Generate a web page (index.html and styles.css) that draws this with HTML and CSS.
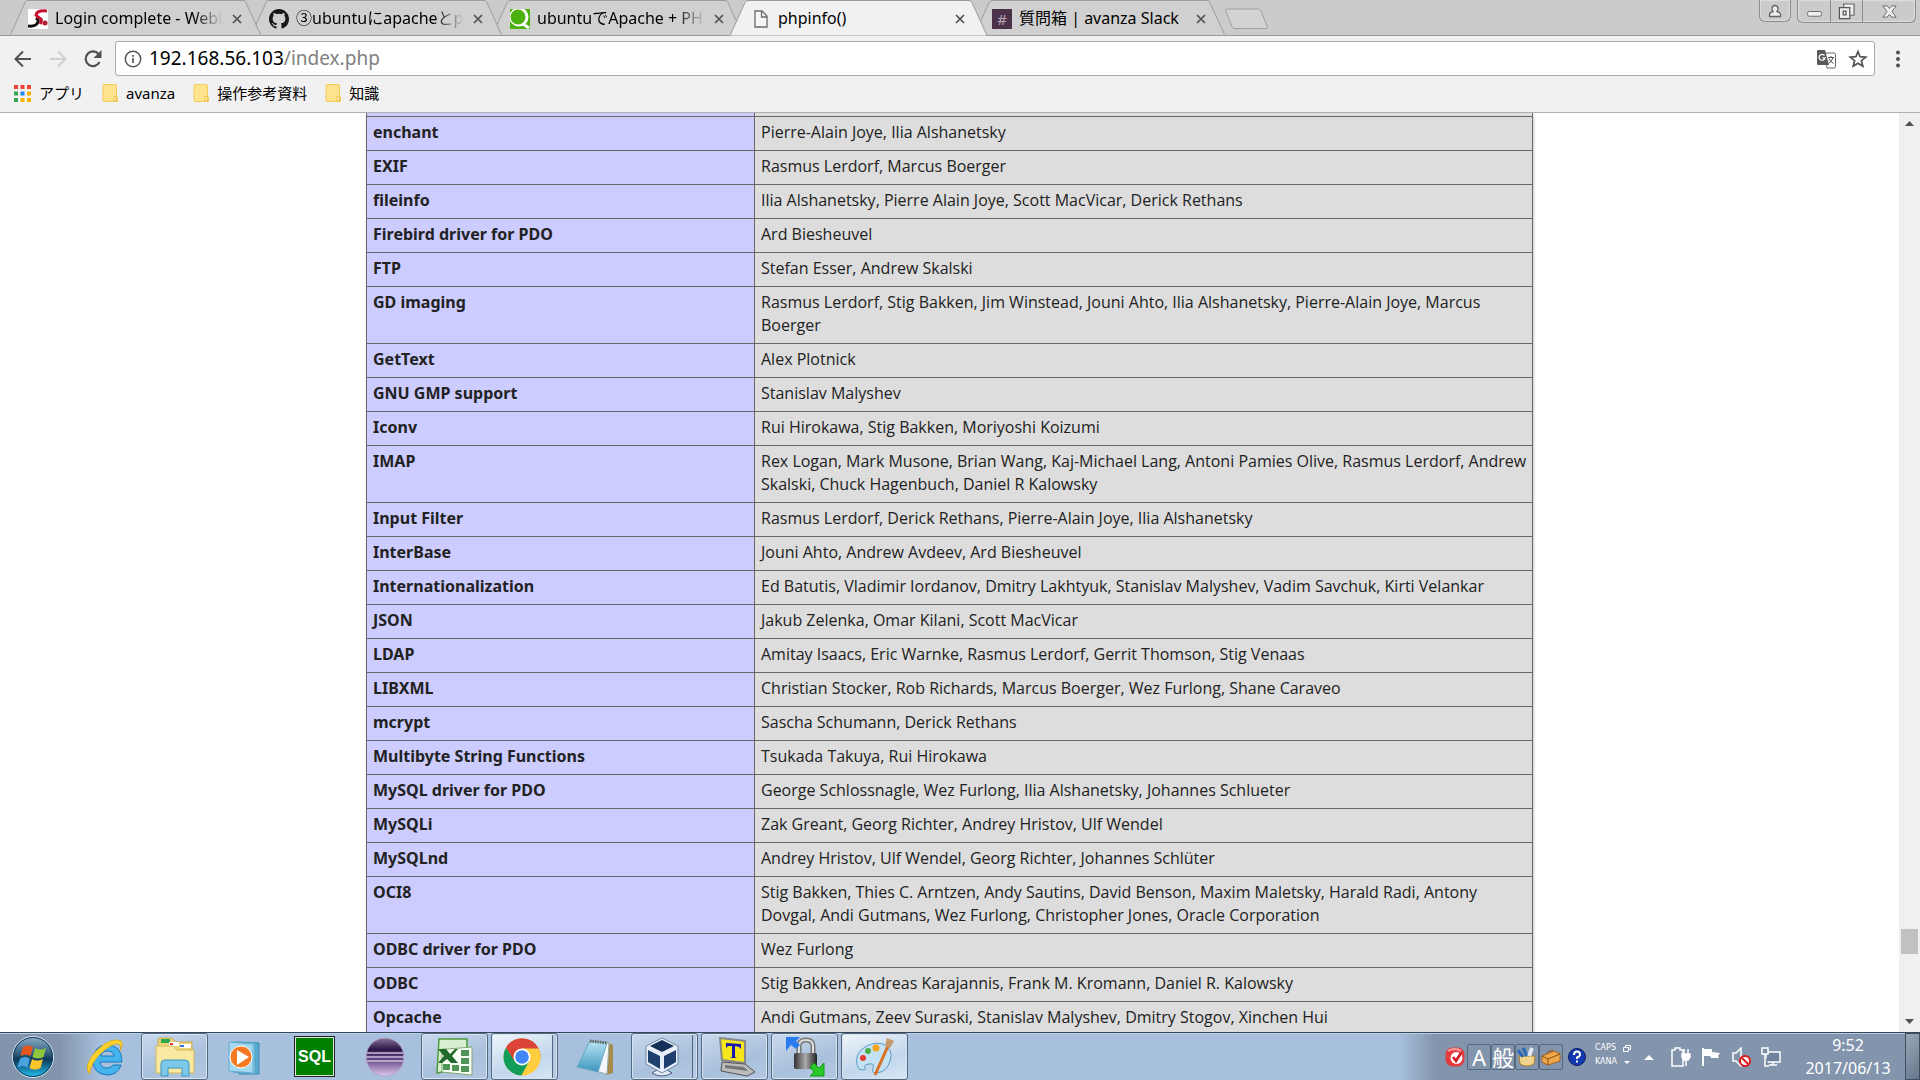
FILE: index.html
```html
<!DOCTYPE html>
<html lang="ja">
<head>
<meta charset="utf-8">
<title>phpinfo()</title>
<link rel="stylesheet" href="styles.css">
</head>
<body>
<svg class="defs" aria-hidden="true">
  <defs>
    <symbol id="close" viewBox="0 0 10 10"><path d="M1 1l8 8M9 1l-8 8" stroke="#505050" stroke-width="1.7" fill="none"/></symbol>
    <symbol id="folder" viewBox="0 0 16 18"><path d="M1 1.5q0-1 1-1h11q1.500 0 1.500 1.500v10l1 1.500v4h-13.500q-1 0-1-1z" fill="#ffe38d" stroke="#f3ca5c"/><path d="M12 12.500h2.500v4.500h-2.500z" fill="#ffedb0" stroke="#eebf4a"/></symbol>
    <symbol id="tabshape" viewBox="0 0 257 36"><path d="M0 35.500L15 2.500Q16 .5 18 .5H239Q241 .5 242 2.500L257 35.500" stroke="#9b9b9b"/></symbol>
    <linearGradient id="orb" x2="0" y2="1"><stop offset="0" stop-color="#8fb0c8"/><stop offset=".45" stop-color="#2b5878"/><stop offset=".55" stop-color="#0c3656"/><stop offset="1" stop-color="#24c4f4"/></linearGradient>
    <linearGradient id="sky" x2="0" y2="1"><stop offset="0" stop-color="#b9e6f5"/><stop offset="1" stop-color="#3d94bd"/></linearGradient>
    <linearGradient id="purple" x2="0" y2="1"><stop offset="0" stop-color="#8a7199"/><stop offset=".3" stop-color="#2b1748"/><stop offset=".55" stop-color="#5f4582"/><stop offset="1" stop-color="#e0c8f0"/></linearGradient>
    <linearGradient id="metal"><stop offset="0" stop-color="#333"/><stop offset=".5" stop-color="#aaa"/><stop offset="1" stop-color="#222"/></linearGradient>
  </defs>
</svg>

<header class="browser">
  <div class="strip">
    <nav class="tabs" aria-label="Tabs">
      <div class="tab t1"><svg class="shape"><use href="#tabshape"/></svg>
        <svg class="fav" viewBox="0 0 20 20"><path fill="#fff" d="M0 0h20v20H0z"/><path d="M0 17Q8 18 10 13Q11 11 8 9" fill="none" stroke="#111" stroke-width="3"/><path d="M19 2Q9 1 8 6Q9 8 13 10Q14 12 12 15" fill="none" stroke="#c8102e" stroke-width="3"/><circle cx="17" cy="14" r="2.500" fill="#b32035"/></svg>
        <a class="title" href="#">Login complete - WebN</a><button class="x" aria-label="Close"><svg><use href="#close"/></svg></button></div>
      <div class="tab t2"><svg class="shape"><use href="#tabshape"/></svg>
        <svg class="fav" viewBox="0 0 16 16"><path fill="#191717" d="M8 0C3.580 0 0 3.580 0 8c0 3.540 2.290 6.530 5.470 7.590.4.070.55-.17.55-.38 0-.19-.01-.82-.01-1.490-2.010.37-2.530-.49-2.690-.94-.09-.23-.48-.94-.82-1.130-.28-.15-.68-.52-.01-.53.63-.01 1.080.58 1.230.82.72 1.210 1.870.87 2.330.66.07-.52.28-.87.51-1.070-1.780-.2-3.640-.89-3.640-3.950 0-.87.31-1.590.82-2.150-.08-.2-.36-1.020.08-2.120 0 0 .67-.21 2.200.82a7.600 7.600 0 0 1 4 0c1.530-1.040 2.200-.82 2.200-.82.44 1.100.16 1.920.08 2.120.51.56.82 1.270.82 2.150 0 3.070-1.870 3.750-3.650 3.950.29.25.54.73.54 1.480 0 1.070-.01 1.930-.01 2.200 0 .21.15.46.55.38A8 8 0 0 0 16 8c0-4.420-3.580-8-8-8z"/></svg>
        <a class="title" href="#">③ubuntuにapacheとph</a><button class="x" aria-label="Close"><svg><use href="#close"/></svg></button></div>
      <div class="tab t3"><svg class="shape"><use href="#tabshape"/></svg>
        <svg class="fav" viewBox="0 0 20 20"><path fill="#4cb10d" d="M0 0h20v20H0z"/><circle cx="9" cy="8" r="9.500" fill="#fff"/><path d="M13 15l6 4" stroke="#fff" stroke-width="3"/><circle cx="8" cy="8" r="7.500" fill="#4cb10d"/></svg>
        <a class="title" href="#">ubuntuでApache + PH</a><button class="x" aria-label="Close"><svg><use href="#close"/></svg></button></div>
      <div class="tab active"><svg class="shape"><use href="#tabshape"/></svg>
        <svg class="fav" viewBox="0 0 20 20"><path d="M4 2h7l5 5v11H4zM10.500 2v6H16" fill="#f7f7f7" stroke="#6b6b6b" stroke-width="1.300"/></svg>
        <a class="title" href="#">phpinfo()</a><button class="x" aria-label="Close"><svg><use href="#close"/></svg></button></div>
      <div class="tab t5"><svg class="shape"><use href="#tabshape"/></svg>
        <span class="fav hash">#</span>
        <a class="title" href="#">質問箱 | avanza Slack</a><button class="x" aria-label="Close"><svg><use href="#close"/></svg></button></div>
    </nav>
    <button class="newtab" aria-label="New tab"><svg viewBox="0 0 43 22"><path d="M2.500 1H33q2 0 3 2l6 15q1 2.500-1 2.500H10q-2 0-3-2L1 3.500Q0 1 2.500 1z" fill="#d3d3d3" stroke="#9e9e9e"/></svg></button>
    <div class="wincontrols">
      <button class="wb user" aria-label="User"><svg viewBox="0 0 14 14"><path d="M1.500 12.500v-2Q2 8 5 7.500Q3.800 6 4 4Q4.500 1.500 7 1.500T10 4Q10.200 6 9 7.500Q12 8 12.500 10.500v2z" fill="#eee" stroke="#666" stroke-width="1.300"/></svg></button>
      <div class="group">
        <button class="wb" aria-label="Minimize"><svg viewBox="0 0 18 18"><rect x="1.500" y="9" width="15" height="5" rx="2" fill="#eee" stroke="#666"/></svg></button>
        <button class="wb" aria-label="Restore"><svg viewBox="0 0 18 18"><path d="M6 1h11v12H6z" fill="#eee" stroke="#666" stroke-width="1.200"/><path d="M1.500 5h11v11.500h-11z" fill="#eee" stroke="#555" stroke-width="1.300"/><path d="M5.500 8.500h3v4h-3z" fill="#eee" stroke="#555" stroke-width="1.300"/></svg></button>
        <button class="wb wide" aria-label="Close window"><svg viewBox="0 0 18 18"><path d="M2 3h4.500L9 6l2.500-3H16l-4.500 6 4.500 6h-4.500L9 12l-2.500 3H2l4.500-6z" fill="#eee" stroke="#666"/></svg></button>
      </div>
    </div>
  </div>
  <div class="toolbar">
    <button class="nav" aria-label="Back"><svg viewBox="0 0 20 20"><path d="M18 10H3M10 2.500L2.500 10 10 17.500" fill="none" stroke="#505050" stroke-width="2"/></svg></button>
    <button class="nav" aria-label="Forward"><svg viewBox="0 0 20 20"><path d="M2 10h15M10 2.500l7.500 7.500-7.500 7.500" fill="none" stroke="#cfcfcf" stroke-width="2"/></svg></button>
    <button class="nav" aria-label="Reload"><svg viewBox="0 0 20 20"><path d="M16.500 13A7.300 7.300 0 1 1 15.500 5" fill="none" stroke="#505050" stroke-width="2.200"/><path d="M18.500 1v8h-8z" fill="#505050"/></svg></button>
    <div class="omnibox">
      <svg class="info" viewBox="0 0 18 18"><circle cx="9" cy="9" r="7.700" fill="none" stroke="#555" stroke-width="1.500"/><path d="M9 8v5M9 5v1.800" stroke="#555" stroke-width="1.700"/></svg>
      <div class="url" role="textbox" aria-label="Address" contenteditable="true" spellcheck="false">192.168.56.103<span>/index.php</span></div>
      <button class="ic" aria-label="Translate"><svg viewBox="0 0 20 20"><path d="M9 4h9q1.500 0 1.500 1.500v12q0 1.500-1.500 1.500h-7z" fill="#fff" stroke="#666"/><path d="M12 8.500h6M15 7v1.500M17 8.500q-1 4-4.500 6M13 9.500q1 3 4.500 5" fill="none" stroke="#555"/><path d="M2 1h7l4 15H2Q1 16 1 15V2Q1 1 2 1z" fill="#5a5a5a"/><path d="M8.500 6.500A3 3 0 1 0 9 9H6.500" fill="none" stroke="#fff" stroke-width="1.300"/></svg></button>
      <button class="ic" aria-label="Bookmark"><svg viewBox="0 0 20 20"><path d="M10 2.500l2.100 5.200 5.600.4-4.300 3.600 1.400 5.500L10 14.200l-4.800 3 1.400-5.500L2.300 8.100l5.600-.4z" fill="none" stroke="#505050" stroke-width="1.700"/></svg></button>
    </div>
    <button class="menu" aria-label="Menu"><svg viewBox="0 0 6 20"><g fill="#505050"><circle cx="3" cy="3.500" r="2"/><circle cx="3" cy="10" r="2"/><circle cx="3" cy="16.500" r="2"/></g></svg></button>
  </div>
  <nav class="bookmarks" aria-label="Bookmarks">
    <a href="#"><svg class="apps" viewBox="0 0 17 17"><path fill="#f04336" d="M0 0h4v4H0zM6.500 0h4v4h-4zM13 0h4v4h-4z"/><path fill="#34a853" d="M0 6.500h4v4H0zM0 13h4v4H0z"/><path fill="#1e88f0" d="M6.500 6.500h4v4h-4z"/><path fill="#fbb300" d="M13 6.500h4v4h-4zM6.500 13h4v4h-4zM13 13h4v4h-4z"/></svg>アプリ</a>
    <a href="#"><svg><use href="#folder"/></svg>avanza</a>
    <a href="#"><svg><use href="#folder"/></svg>操作参考資料</a>
    <a href="#"><svg><use href="#folder"/></svg>知識</a>
  </nav>
</header>

<div class="viewport">
  <main class="page">
    <table>
      <colgroup><col class="name"><col></colgroup>
      <tbody>
      <tr class="cut"><th></th><td></td></tr>
      <tr><th scope="row">enchant</th><td>Pierre-Alain Joye, Ilia Alshanetsky</td></tr>
      <tr><th scope="row">EXIF</th><td>Rasmus Lerdorf, Marcus Boerger</td></tr>
      <tr><th scope="row">fileinfo</th><td>Ilia Alshanetsky, Pierre Alain Joye, Scott MacVicar, Derick Rethans</td></tr>
      <tr><th scope="row">Firebird driver for PDO</th><td>Ard Biesheuvel</td></tr>
      <tr><th scope="row">FTP</th><td>Stefan Esser, Andrew Skalski</td></tr>
      <tr><th scope="row">GD imaging</th><td>Rasmus Lerdorf, Stig Bakken, Jim Winstead, Jouni Ahto, Ilia Alshanetsky, Pierre-Alain Joye, Marcus<br>Boerger</td></tr>
      <tr><th scope="row">GetText</th><td>Alex Plotnick</td></tr>
      <tr><th scope="row">GNU GMP support</th><td>Stanislav Malyshev</td></tr>
      <tr><th scope="row">Iconv</th><td>Rui Hirokawa, Stig Bakken, Moriyoshi Koizumi</td></tr>
      <tr><th scope="row">IMAP</th><td>Rex Logan, Mark Musone, Brian Wang, Kaj-Michael Lang, Antoni Pamies Olive, Rasmus Lerdorf, Andrew<br>Skalski, Chuck Hagenbuch, Daniel R Kalowsky</td></tr>
      <tr><th scope="row">Input Filter</th><td>Rasmus Lerdorf, Derick Rethans, Pierre-Alain Joye, Ilia Alshanetsky</td></tr>
      <tr><th scope="row">InterBase</th><td>Jouni Ahto, Andrew Avdeev, Ard Biesheuvel</td></tr>
      <tr><th scope="row">Internationalization</th><td>Ed Batutis, Vladimir Iordanov, Dmitry Lakhtyuk, Stanislav Malyshev, Vadim Savchuk, Kirti Velankar</td></tr>
      <tr><th scope="row">JSON</th><td>Jakub Zelenka, Omar Kilani, Scott MacVicar</td></tr>
      <tr><th scope="row">LDAP</th><td>Amitay Isaacs, Eric Warnke, Rasmus Lerdorf, Gerrit Thomson, Stig Venaas</td></tr>
      <tr><th scope="row">LIBXML</th><td>Christian Stocker, Rob Richards, Marcus Boerger, Wez Furlong, Shane Caraveo</td></tr>
      <tr><th scope="row">mcrypt</th><td>Sascha Schumann, Derick Rethans</td></tr>
      <tr><th scope="row">Multibyte String Functions</th><td>Tsukada Takuya, Rui Hirokawa</td></tr>
      <tr><th scope="row">MySQL driver for PDO</th><td>George Schlossnagle, Wez Furlong, Ilia Alshanetsky, Johannes Schlueter</td></tr>
      <tr><th scope="row">MySQLi</th><td>Zak Greant, Georg Richter, Andrey Hristov, Ulf Wendel</td></tr>
      <tr><th scope="row">MySQLnd</th><td>Andrey Hristov, Ulf Wendel, Georg Richter, Johannes Schlüter</td></tr>
      <tr><th scope="row">OCI8</th><td>Stig Bakken, Thies C. Arntzen, Andy Sautins, David Benson, Maxim Maletsky, Harald Radi, Antony<br>Dovgal, Andi Gutmans, Wez Furlong, Christopher Jones, Oracle Corporation</td></tr>
      <tr><th scope="row">ODBC driver for PDO</th><td>Wez Furlong</td></tr>
      <tr><th scope="row">ODBC</th><td>Stig Bakken, Andreas Karajannis, Frank M. Kromann, Daniel R. Kalowsky</td></tr>
      <tr><th scope="row">Opcache</th><td>Andi Gutmans, Zeev Suraski, Stanislav Malyshev, Dmitry Stogov, Xinchen Hui</td></tr>
      </tbody>
    </table>
  </main>
  <div class="scrollbar">
    <button aria-label="Scroll up"><svg viewBox="0 0 9 5"><path d="M0 5L4.500 0 9 5z" fill="#505050"/></svg></button>
    <div class="track"><div class="thumb"></div></div>
    <button aria-label="Scroll down"><svg viewBox="0 0 9 5"><path d="M0 0l4.500 5L9 0z" fill="#505050"/></svg></button>
  </div>
</div>

<footer class="taskbar">
  <button class="start" aria-label="Start"><svg viewBox="0 0 44 44"><circle cx="22" cy="22" r="20.500" fill="url(#orb)" stroke="#d6e6f2"/><circle cx="22" cy="22" r="19.500" fill="none" stroke="#123a58"/><path d="M12 12q5-3 10 0l-2.500 9q-5-3-10 0z" fill="#e8541e"/><path d="M24 13q5 3 11 0l-2.500 9q-6 3-11 0z" fill="#8cc63c"/><path d="M9 23.500q5-3 10 0l-2.500 9q-5-3-10 0z" fill="#4aa3e0"/><path d="M21 24q5 3 11 0l-2.500 9q-6 3-11 0z" fill="#fcc52a"/></svg></button>
  <div class="apps-row">
    <button class="task" aria-label="Internet Explorer"><svg viewBox="0 0 40 40"><path d="M37 25H15q1 6 7 6 4 0 6-3h8q-3 10-14 10-14-1-14-15Q9 8 22 8q15 0 15 17zM16 19h13q-1-5-6.500-5T16 19z" fill="#45b4ec" stroke="#1878bc"/><path d="M5 37Q-3 30 11 14 27-1 36 4q3 3-1 10 2-6-1-7Q28 5 14 18 4 30 5 37z" fill="#fcd12c" stroke="#dca010" stroke-width=".7"/></svg></button>
    <button class="task run" aria-label="Explorer"><svg viewBox="0 0 40 40"><path d="M3 34V3q0-2 2-2h12l3 4h17v29z" fill="#eed478" stroke="#c8a84a"/><path d="M6 2h9v4H6z" fill="#2aa84a"/><path d="M14 5h10v4H14z" fill="#fff"/><path d="M15 6h3v2h-3z" fill="#e03a28"/><path d="M25 7h11v4H25z" fill="#fff"/><path d="M25 8h4v2h-4z" fill="#287ad0"/><path d="M1 9h17l4 4h17v23H1z" fill="#f8e8a0" stroke="#d4b85c"/><path d="M6 39V27q0-4 4-4h20q4 0 4 4v12h-7v-8H13v8z" fill="#7cc8e8" stroke="#3c94c0"/></svg></button>
    <button class="task" aria-label="Media Player"><svg viewBox="0 0 40 40"><path d="M12 5l22 1v31H14z" fill="#57aad0" stroke="#3b8ab4"/><path d="M8 5l22 1v31L8 35z" fill="#8bcce5" stroke="#4f9fc4"/><path d="M4 5l24 2v29L4 34z" fill="#a4d8ee" stroke="#67add0"/><circle cx="16" cy="20" r="11" fill="#f47920" stroke="#fff"/><path d="M12 13l12 7-12 8z" fill="#fff"/></svg></button>
    <button class="task" aria-label="SQL"><span class="sql">SQL</span></button>
    <button class="task" aria-label="Eclipse"><svg viewBox="0 0 40 40"><circle cx="20" cy="20" r="19" fill="url(#purple)" stroke="#b5a5c8"/><path d="M2 16h36M1 20h38M2 24h36" stroke="#cbbddd" stroke-width="1.500"/></svg></button>
    <button class="task run" aria-label="Excel"><svg viewBox="0 0 40 40"><path d="M4 2h28v28L2 36z" fill="#d9efd2" stroke="#4c9c3c" stroke-width="1.500"/><path d="M13 12l24-2v28l-30-3V12z" fill="#fafff5" stroke="#7fa770"/><path d="M26 13h8v6h-8zM26 21h8v6h-8zM26 29h8v6h-8zM17 28h7v6h-7zM8 27h7v6H8z" fill="#4d9658"/><path d="M3 12h8l4 5 5-5h3l-6 7 6 7h-7l-4-4-5 4H3l6-7z" fill="#206b2a"/></svg></button>
    <button class="task run stacked current" aria-label="Chrome"><svg viewBox="0 0 40 40"><circle cx="20" cy="20" r="18.500" fill="#ffcd40"/><path d="M20 20H38.500A18.500 18.500 0 0 0 4 10.700L12 25z" fill="#db4437"/><path d="M20 11.500H36.400A18.500 18.500 0 0 0 4 10.700z" fill="#db4437"/><path d="M4 10.700A18.500 18.500 0 0 0 19.500 38.500L27.400 24.300 20 20 12.600 24.300z" fill="#0f9d58"/><path d="M20 11.500h16.400A18.500 18.500 0 0 1 19.500 38.500L27.400 24.300z" fill="#ffcd40"/><circle cx="20" cy="20" r="8.500" fill="#fff"/><circle cx="20" cy="20" r="6.800" fill="#4285f4"/></svg></button>
    <button class="task" aria-label="Notepad"><svg viewBox="0 0 40 40"><path d="M32 5l6 3v28l-7 2z" fill="#a68b4c"/><path d="M16 5l18 1-2 31-12-3z" fill="#f5f8fa" stroke="#9aa"/><path d="M15 4l17 2-9 29-21-5z" fill="url(#sky)" stroke="#6aabc2"/><path d="M15 4l17 2" stroke="#666" stroke-width="3" stroke-dasharray="1.500 1"/></svg></button>
    <button class="task run stacked" aria-label="VirtualBox"><svg viewBox="0 0 40 40"><path d="M10 36q10-8 20 0-10 6-20 0z" fill="#e3e9f4" stroke="#4c5f80"/><path d="M20 1l16 8v18L20 36 4 27V9z" fill="#e8eef8" stroke="#7086ac"/><path d="M20 3l12 6-12 6L8 9z" fill="#143058"/><path d="M6 13l12 6v13L6 25zM34 13l-12 6v13l12-7z" fill="#1c3f6e"/></svg></button>
    <button class="task run" aria-label="Tera Term"><svg viewBox="0 0 40 40"><path d="M5 1l25 3v22L7 23z" fill="#f5e61c" stroke="#888" stroke-width="2"/><path d="M11 6l15 1v5l-2-2-4-1v11l2 1h-7l2-1V9l-4 0-2 2z" fill="#1818b0"/><path d="M7 25l23 2 10 8-8 4-26-5z" fill="#bbb" stroke="#555"/><path d="M10 28l19 2 4 4-23-3z" fill="#777"/></svg></button>
    <button class="task run" aria-label="WinSCP"><svg viewBox="0 0 40 40"><path d="M14 18V9q0-6 7-6t7 6v9" fill="none" stroke="#777" stroke-width="5"/><path d="M14 18V9q0-6 7-6t7 6v9" fill="none" stroke="#ddd" stroke-width="2"/><rect x="9" y="16" width="23" height="16" rx="2" fill="url(#metal)"/><path d="M1 0h14l-4 4 4 4-4 4-5-4-5 6z" fill="#2b7bf0"/><path d="M39 39H25l4-4-4-5 4-4 5 5 5-5z" fill="#28c828" stroke="#159a18"/></svg></button>
    <button class="task run current" aria-label="Paint"><svg viewBox="0 0 40 40"><path d="M4 32Q-2 22 6 13q10-9 22-6 11 5 7 17-3 11-14 12-5 0-3-5t-4-4-4 4-6 1z" fill="#c5e2f4" stroke="#5a9cc8"/><circle cx="8" cy="21" r="3" fill="#e03c30"/><circle cx="13" cy="14" r="3" fill="#46b040"/><circle cx="21" cy="11" r="3.500" fill="#f8a41c"/><path d="M33 9L20 38" stroke="#d87024" stroke-width="3"/><path d="M30 9l2-8 7 3-4 7z" fill="#c69a6b"/></svg></button>
  </div>
  <div class="tray">
    <svg class="s20" viewBox="0 0 20 20"><rect width="19" height="19" x=".5" y=".5" rx="7" fill="#e33c40"/><path d="M3 4q7-4 13 0" stroke="#f9a0a0" stroke-width="2" fill="none"/><circle cx="11.500" cy="11" r="6" fill="#fff"/><path d="M8 10l3 4 5-8" fill="none" stroke="#d01820" stroke-width="2.500"/></svg>
    <div class="ime">
      <button>A</button><button>般</button>
      <button aria-label="IME pad"><svg viewBox="0 0 20 20"><path d="M2 9h16l-1 8q-7 4-14 0z" fill="#f0d48c" stroke="#a87d2c"/><path d="M1 3l5 7M6 1l4 8" stroke="#2968b8" stroke-width="3"/><path d="M15 1l-3 8" stroke="#e0e8f0" stroke-width="4"/></svg></button>
      <button aria-label="IME tools"><svg viewBox="0 0 20 20"><path d="M1 9l12-5 6 3v7L7 18l-6-3z" fill="#f0a84c" stroke="#a8621c"/><path d="M1 9l6 3 12-5M7 12v6M6 7q1-4 6-3" fill="none" stroke="#8a4c10"/></svg></button>
    </div>
    <svg class="s20" viewBox="0 0 20 20"><circle cx="10" cy="10" r="8.500" fill="#1438b0" stroke="#0c1c60"/><path d="M7 8q0-3.500 3-3.500t3 3q0 2-3 3V12M10 13.500v2" fill="none" stroke="#fff" stroke-width="2"/></svg>
    <div class="caps"><span>CAPS <svg viewBox="0 0 8 7"><path d="M2.500 2.500V.5h5v4h-2M.5 2.500h5v4h-5z" fill="none" stroke="#fff"/></svg></span><span>KANA <svg viewBox="0 0 8 7"><path d="M1 2h6L4 5z" fill="#fff"/></svg></span></div>
    <svg class="up" viewBox="0 0 10 6"><path d="M0 6l5-5 5 5z" fill="#fff"/></svg>
    <svg class="s20" viewBox="0 0 20 20"><path d="M4 1h5v2h3v16H1V3h3z" fill="#8395ac" stroke="#fff" stroke-width="1.500"/><path d="M13 2v5M17 2v5M11 7h8v3l-2 3h-4l-2-3zM15 13v6" fill="#fff" stroke="#fff" stroke-width="1.500"/></svg>
    <svg class="s20" viewBox="0 0 20 20"><path d="M2 1v18" stroke="#fff" stroke-width="2"/><path d="M3 2h8v3l8 1-2 3 1 2H10l-1-2H3z" fill="#fff"/></svg>
    <svg class="s20" viewBox="0 0 20 20"><path d="M2 6h3l5-5v18l-5-5H2z" fill="#8395ac" stroke="#fff" stroke-width="1.500"/><circle cx="14" cy="14" r="5" fill="#fff" stroke="#e01818" stroke-width="2"/><path d="M11 11l6 6" stroke="#e01818" stroke-width="2"/></svg>
    <svg class="s20" viewBox="0 0 20 20"><path d="M5 5h14v10H5zM8 18h8M12 15v3" fill="#6f839c" stroke="#fff" stroke-width="1.500"/><path d="M1 1h6v6H1zM4 7v12h4" fill="#7c8ea6" stroke="#fff" stroke-width="1.500"/></svg>
    <div class="clock"><time>9:52</time><time>2017/06/13</time></div>
    <button class="desktop" aria-label="Show desktop"></button>
  </div>
</footer>
</body>
</html>
```
FILE: styles.css
```css
* { box-sizing: border-box; }

body {
  margin: 0;
  height: 100vh;
  display: flex;
  flex-direction: column;
  overflow: hidden;
  background: #fff;
  color: #000;
  font: 15px/20px "Noto Sans", "Noto Sans CJK JP", sans-serif;
}

button {
  margin: 0;
  padding: 0;
  border: 0;
  background: none;
  color: inherit;
  font: inherit;
}

a { color: inherit; text-decoration: none; }
svg { display: block; flex: none; }
.defs { position: absolute; width: 0; height: 0; }

/* tab strip */
.browser {
  flex: none;
  background: #f1f1f1;
  border-bottom: 1px solid #b0b0b0;
}

.strip {
  display: flex;
  height: 36px;
  padding: 0 0 0 7px;
  background: #cbcbcb;
  box-shadow: inset 0 -1px #9b9b9b;
}

.tabs { display: flex; }

.tab {
  position: relative;
  display: flex;
  align-items: center;
  gap: 7px;
  width: 257px;
  height: 36px;
  margin-right: -16px;
  padding: 2px 20px 0 21px;
}

.t1 { z-index: 4; }
.t2 { z-index: 3; }
.t3 { z-index: 2; }
.t5 { z-index: 1; }
.active { z-index: 5; }

.shape {
  position: absolute;
  z-index: -1;
  left: 0;
  top: 0;
  width: 257px;
  height: 36px;
  fill: #d0d0d0;
}

.tab:not(.active) .shape { border-bottom: 1px solid #9b9b9b; }
.active .shape { fill: #f1f1f1; }
.fav { width: 20px; height: 20px; }

.hash {
  background: #4b3249;
  color: #b8a4b8;
  text-align: center;
}

.title {
  flex: 1;
  overflow: hidden;
  white-space: nowrap;
  font-size: 16px;
  line-height: 22px;
  padding-bottom: 2px;
  -webkit-mask-image: linear-gradient(90deg, #000 calc(100% - 30px), transparent);
  mask-image: linear-gradient(90deg, #000 calc(100% - 30px), transparent);
}

.active .title, .t5 .title { -webkit-mask-image: none; mask-image: none; }
.x { padding: 2px; }
.x svg { width: 10px; height: 10px; }
.newtab { align-self: flex-start; margin: 8px 0 0 13px; }
.newtab svg { width: 43px; height: 22px; }

.wincontrols {
  display: flex;
  align-items: flex-start;
  gap: 6px;
  margin-left: auto;
  padding-right: 4px;
}

.wb {
  display: flex;
  justify-content: center;
  align-items: center;
  width: 32px;
  height: 22px;
}

.wb svg { width: 17px; height: 17px; }

.user, .group {
  border: 1px solid #8d8d8d;
  border-top: 0;
  border-radius: 0 0 6px 6px;
  box-shadow: inset 0 0 1px 1px #dedede;
}

.group { display: flex; }
.user svg { width: 14px; height: 14px; }
.group .wb + .wb { border-left: 1px solid #8d8d8d; }
.group .wide { width: 53px; }

/* toolbar */
.toolbar {
  display: flex;
  align-items: center;
  padding: 5px 19px 0 13px;
}

.nav { margin-right: 15px; }
.nav svg { width: 20px; height: 20px; }
.nav:nth-of-type(3) { margin-right: 12px; }

.omnibox {
  flex: 1;
  display: flex;
  align-items: center;
  height: 35px;
  padding: 0 6px 0 8px;
  background: #fff;
  border: 1px solid #a9a9a9;
  border-radius: 3px;
}

.info { width: 18px; height: 18px; }

.url {
  flex: 1;
  padding: 0 0 2px 7px;
  font-size: 19px;
  line-height: 30px;
  outline: 0;
}

.url span { color: #808080; }
.ic { margin-left: 12px; }
.ic svg { width: 20px; height: 20px; }
.menu { margin-left: 20px; }
.menu svg { width: 6px; height: 20px; }

.bookmarks {
  display: flex;
  align-items: center;
  gap: 18px;
  height: 36px;
  padding: 0 14px 2px;
}

.bookmarks a { display: flex; align-items: center; gap: 8px; }
.bookmarks svg { width: 16px; height: 18px; }
.bookmarks .apps { width: 17px; height: 17px; }

/* page */
.viewport {
  flex: 1;
  min-height: 0;
  display: flex;
}

.page { flex: 1; overflow: hidden; }

table {
  width: 1167px;
  max-width: 100%;
  margin: 0 auto;
  border-collapse: collapse;
  table-layout: fixed;
  box-shadow: 1px 2px 3px #ccc;
  color: #222;
}

.name { width: 388px; }

th, td {
  padding: 4px 0 6px 6px;
  border: 1px solid #666;
  font-size: 16px;
  line-height: 23px;
  text-align: left;
  vertical-align: baseline;
}

th { background: #ccf; font-weight: bold; }
td { background: #ddd; font-family: "Open Sans", "Noto Sans", sans-serif; }
.cut th, .cut td { height: 3px; padding: 0; border-top: 0; }

.scrollbar {
  display: flex;
  flex-direction: column;
  width: 21px;
  background: #f0f0f0;
}

.scrollbar button {
  display: flex;
  justify-content: center;
  align-items: center;
  height: 21px;
}

.scrollbar svg { width: 9px; height: 5px; }

.track {
  flex: 1;
  display: flex;
  flex-direction: column;
  padding: 0 2px;
}

.track::before { content: ""; flex: 795; }
.track::after { content: ""; flex: 57; }
.thumb { height: 25px; background: #c1c1c1; }

/* taskbar */
.taskbar {
  flex: none;
  display: flex;
  height: 48px;
  border-top: 1px solid #37475a;
  box-shadow: inset 0 1px #b8cee6;
  background: linear-gradient(90deg, #8395ac 60px, #a6c0de 100px, #a6c0de calc(100% - 520px), #8395ac calc(100% - 485px));
}

.start { width: 66px; display: grid; place-items: center; }
.start svg { width: 44px; height: 44px; }

.apps-row {
  display: flex;
  gap: 3px;
  padding-left: 5px;
}

.task {
  display: grid;
  place-items: center;
  width: 67px;
  height: 47px;
  border: 1px solid transparent;
  border-radius: 3px;
}

.task svg { width: 40px; height: 40px; }

.run {
  border-color: #54687f;
  box-shadow: inset 0 0 0 1px #d6e4f2;
  background: linear-gradient(160deg, #c9d9ec, #a9c0dc 60%, #b3c9e2);
}

.current { background: linear-gradient(160deg, #f0f5fa, #c2d7ec 60%, #d8e7f5); }
.stacked { padding-right: 5px; box-shadow: inset 0 0 0 1px #d6e4f2, inset -4px 0 #b4c8e0, inset -5px 0 #54687f; }

.sql {
  display: grid;
  place-items: center;
  width: 39px;
  height: 39px;
  border: 1px solid #d8e8d8;
  outline: 1px solid #222;
  background: #008000;
  color: #fff;
  font: bold 16px/20px "Liberation Sans", sans-serif;
}

.tray {
  display: flex;
  align-items: center;
  margin-left: auto;
  color: #fff;
}

.s20 { width: 20px; height: 20px; margin-right: 10px; }
.tray > .s20:first-child { margin-right: 2px; }
.ime { display: flex; margin-right: 4px; }

.ime button {
  display: grid;
  place-items: center;
  width: 24px;
  height: 26px;
  border: 1px solid #53677f;
  border-radius: 2px;
  font-size: 22px;
  line-height: 24px;
}

.ime svg { width: 20px; height: 20px; }
.ime + .s20 { margin-right: 8px; }
.caps { width: 49px; font: 8px/14px "DejaVu Sans", sans-serif; padding-bottom: 3px; }
.caps span { display: flex; justify-content: space-between; align-items: center; padding-right: 13px; }
.caps svg { width: 8px; height: 7px; }
.up { width: 10px; height: 6px; margin-right: 17px; }

.clock {
  display: flex;
  flex-direction: column;
  width: 114px;
  text-align: center;
  font-size: 16px;
  line-height: 23px;
}

.desktop {
  align-self: stretch;
  width: 15px;
  border: 1px solid #3e4f63;
  background: linear-gradient(135deg, #9aa8b8, #67788c);
}
```
